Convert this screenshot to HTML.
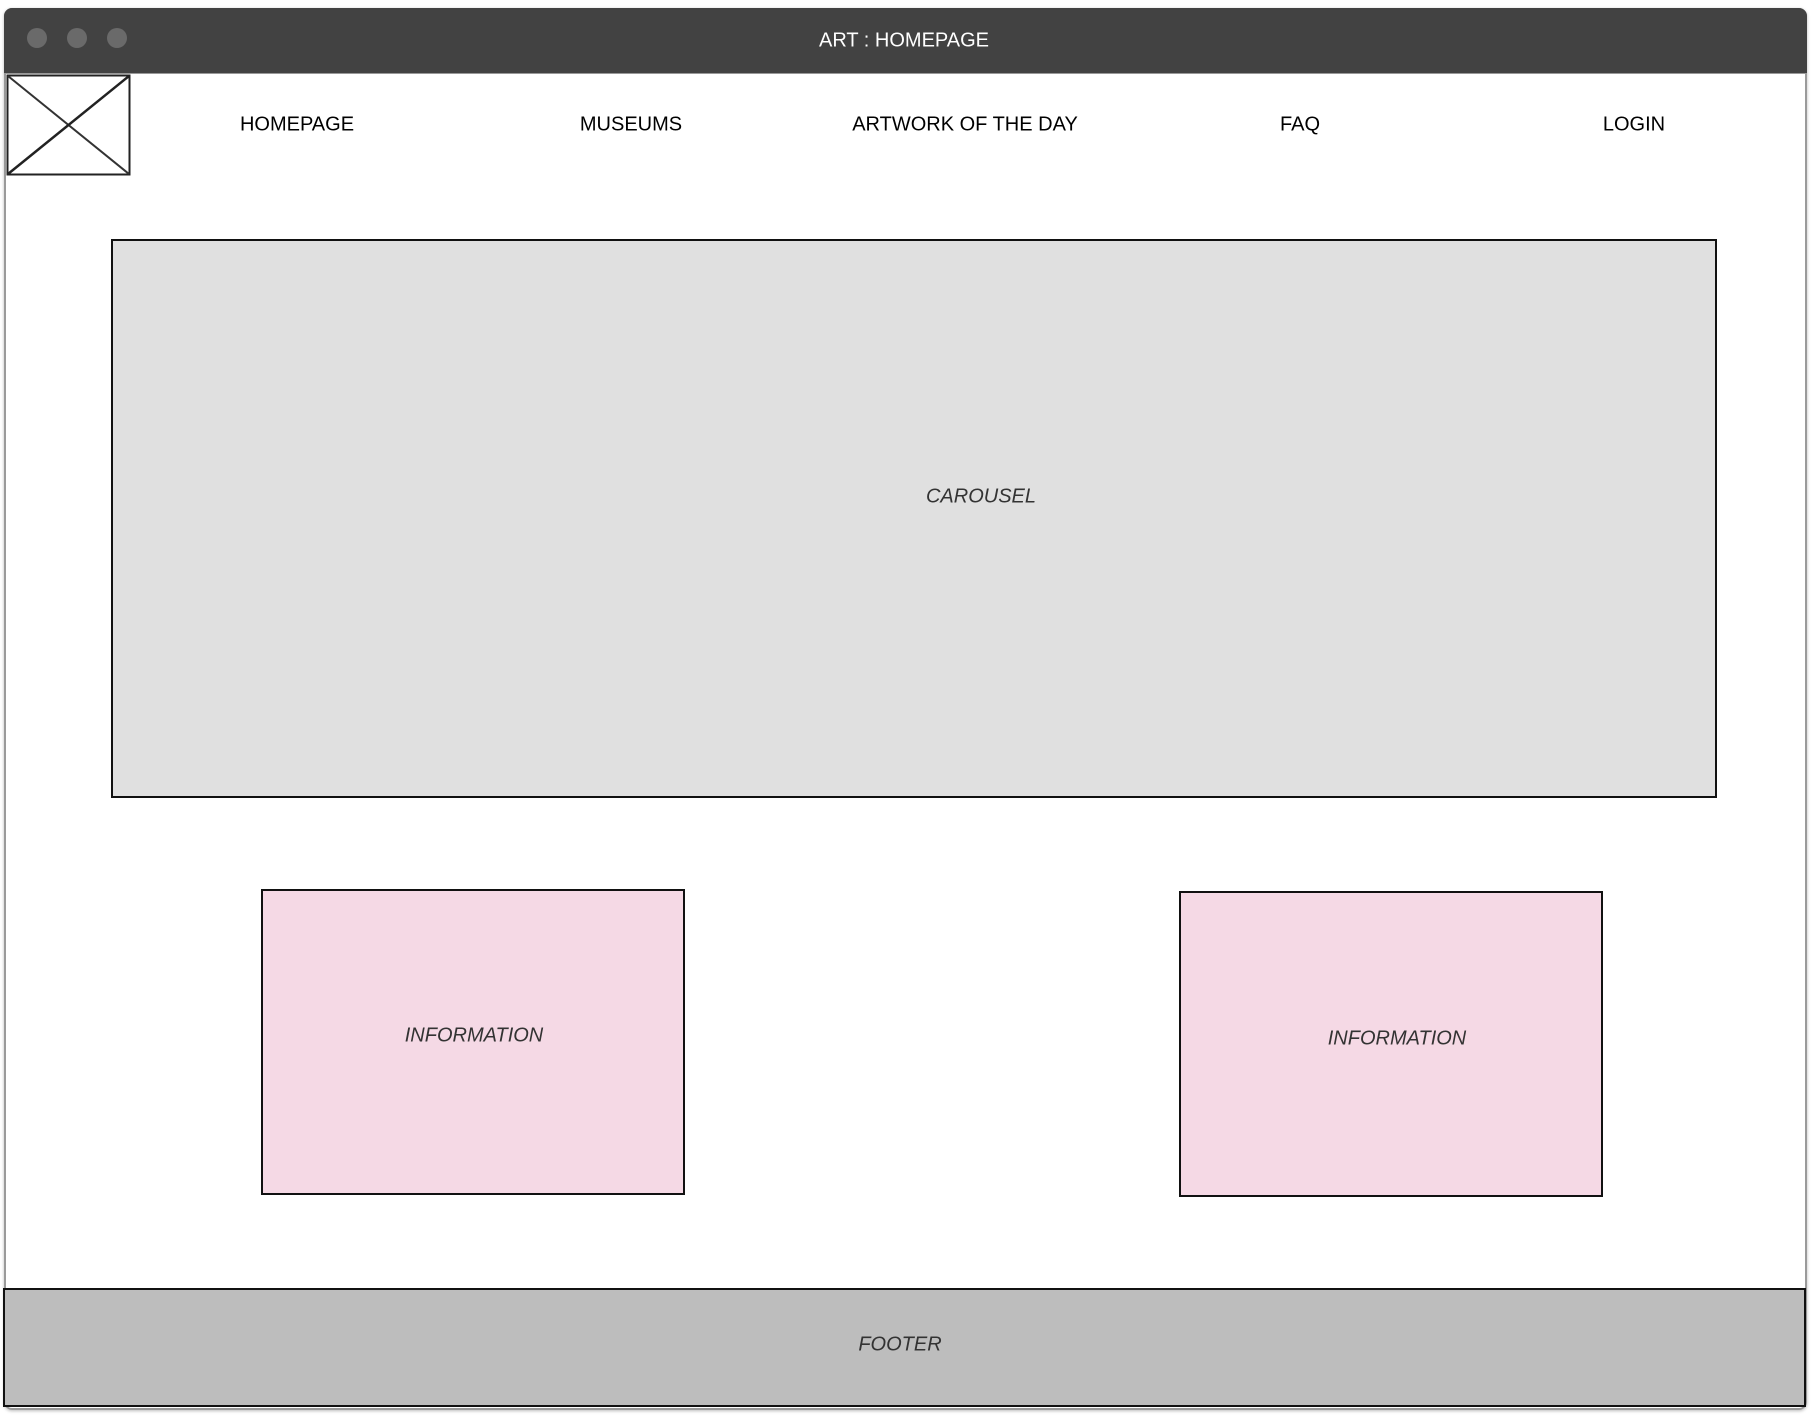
<!DOCTYPE html>
<html><head><style>
body{margin:0;width:1812px;height:1416px;background:#fff;position:relative;overflow:hidden;font-family:"Liberation Sans",sans-serif;}
.a{position:absolute;box-sizing:border-box}
.t{position:absolute;transform:translate(-50%,-50%);white-space:nowrap;font-size:20px;color:#000}
.i{font-style:italic;color:#333}
</style></head><body>
<div class="a" style="left:4px;top:8px;width:1803px;height:1402px;border:2px solid #9a9a9a;border-radius:8px;box-shadow:0 1px 3px #bbb"></div>
<div class="a" style="left:4px;top:8px;width:1803px;height:66px;background:#424242;border-radius:8px 8px 0 0;border-bottom:1px solid #999"></div>
<div class="a" style="left:27px;top:28px;width:20px;height:20px;border-radius:50%;background:#6a6a6a"></div>
<div class="a" style="left:67px;top:28px;width:20px;height:20px;border-radius:50%;background:#6a6a6a"></div>
<div class="a" style="left:107px;top:28px;width:20px;height:20px;border-radius:50%;background:#6a6a6a"></div>
<div class="t" style="left:904px;top:41px;color:#fff">ART : HOMEPAGE</div>
<svg class="a" style="left:6px;top:74px" width="125" height="102"><rect x="1.5" y="1.5" width="122" height="99" fill="#fff" stroke="#222" stroke-width="2"/><line x1="2" y1="2" x2="123" y2="100" stroke="#333" stroke-width="2"/><line x1="123" y1="2" x2="2" y2="100" stroke="#222" stroke-width="2.5"/></svg>
<div class="t" style="left:297px;top:125px">HOMEPAGE</div>
<div class="t" style="left:631px;top:125px">MUSEUMS</div>
<div class="t" style="left:965px;top:125px">ARTWORK OF THE DAY</div>
<div class="t" style="left:1300px;top:125px">FAQ</div>
<div class="t" style="left:1634px;top:125px">LOGIN</div>
<div class="a" style="left:111px;top:239px;width:1606px;height:559px;background:#e0e0e0;border:2px solid #111"></div>
<div class="t i" style="left:981px;top:497px">CAROUSEL</div>
<div class="a" style="left:261px;top:889px;width:424px;height:306px;background:#f5d9e5;border:2px solid #111"></div>
<div class="t i" style="left:474px;top:1036px">INFORMATION</div>
<div class="a" style="left:1179px;top:891px;width:424px;height:306px;background:#f5d9e5;border:2px solid #111"></div>
<div class="t i" style="left:1397px;top:1039px">INFORMATION</div>
<div class="a" style="left:3px;top:1288px;width:1803px;height:119px;background:#bdbdbd;border:2px solid #111"></div>
<div class="t i" style="left:900px;top:1345px">FOOTER</div>
</body></html>
